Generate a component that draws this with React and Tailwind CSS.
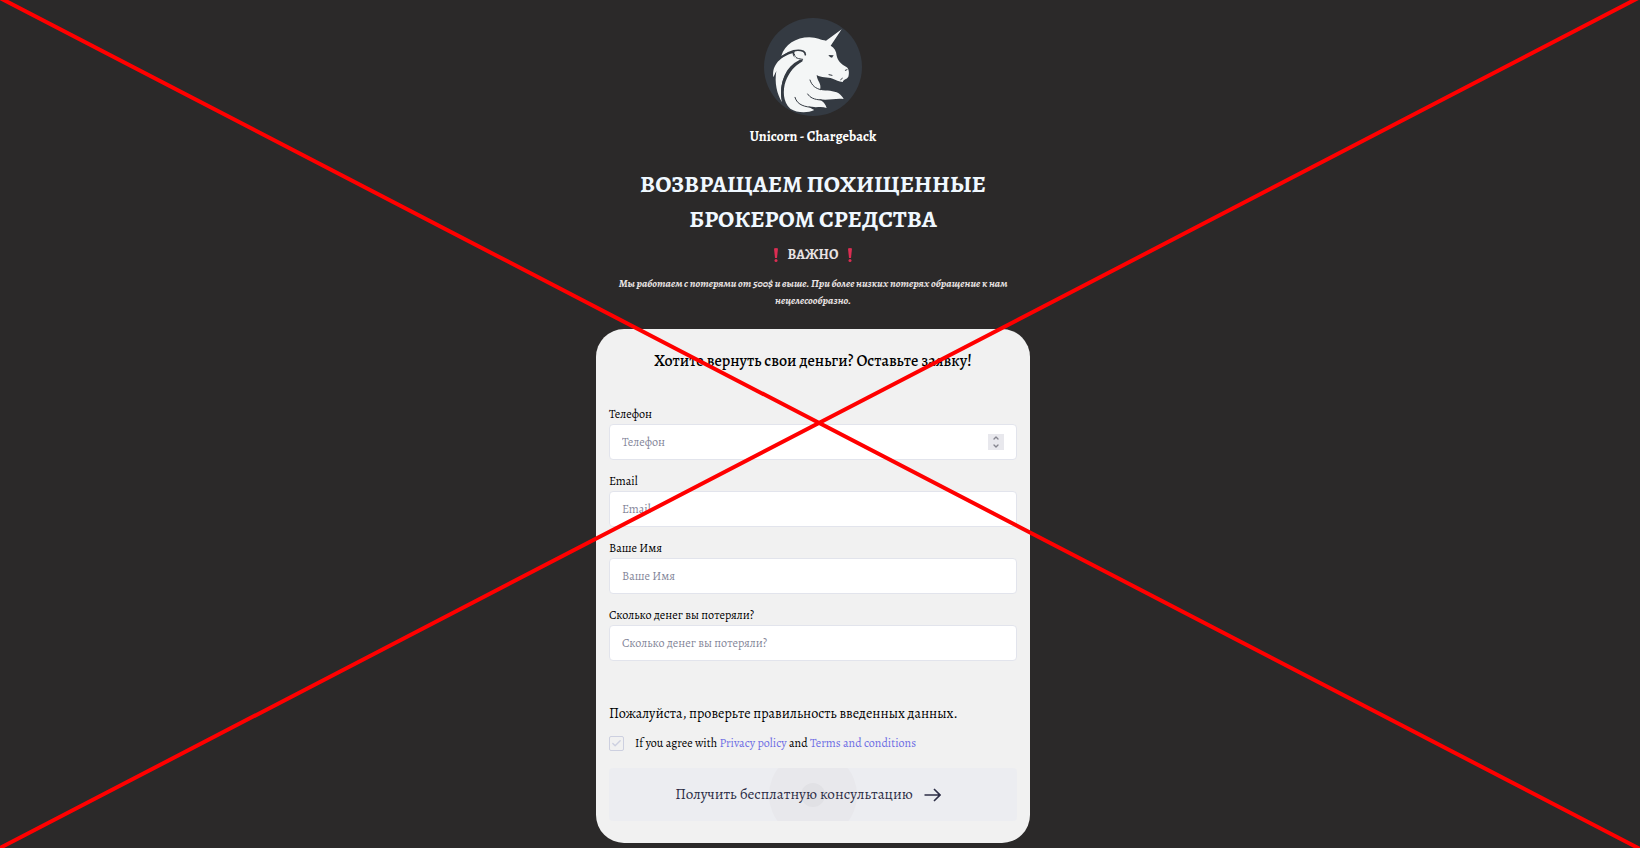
import React from "react";
import { Check, ChevronDown, ChevronUp } from "lucide-react";

const fields = [
  { id: "phone", label: "Телефон", type: "number" },
  { id: "email", label: "Email", type: "email" },
  { id: "name", label: "Ваше Имя", type: "text" },
  { id: "amount", label: "Сколько денег вы потеряли?", type: "text" },
];

const Logo = () => (
  <svg className="size-[98px]" viewBox="72 53 294 294" aria-hidden="true">
    <circle cx="219" cy="200" r="147" fill="#343a42" />
    <g fill="#f4f6f6">
      <path d="M124 167C134 133 168 111 208 111C230 111 244 120 258 121L305 87L272 136C283 142 289 152 290 166C293 181 304 192 318 199C328 204 328 219 325 229C319 238 312 235 308 245C296 244 288 239 278 235C262 229 244 233 230 224C231 241 246 251 240 268C262 272 280 269 296 279C304 285 308 291 311 296C284 293 262 302 236 296C249 303 257 311 260 323C243 317 228 324 205 318C213 325 219 328 223 329C202 339 171 338 151 325C128 306 128 268 137 243C147 216 165 196 187 180L164 173C160 165 161 158 166 153C150 153 135 161 124 167Z" />
      <path d="M158 159C124 168 94 193 100 231L109 212C103 247 111 282 126 305C117 262 129 213 163 188L182 177C168 176 158 171 158 159Z" />
    </g>
    <g fill="none" stroke="#343a42" strokeLinecap="round">
      <path strokeWidth="5" d="M126 169C149 152 174 145 190 153C195 156 196 160 196 163" />
      <path strokeWidth="3" d="M163 161C164 175 177 175 188 177" />
      <path strokeWidth="6" d="M185 181C141 207 119 245 128 299" />
      <path strokeWidth="3" d="M210 239C216 257 227 264 242 268" />
      <path strokeWidth="3" d="M203 281C210 292 222 298 244 299" />
      <path strokeWidth="3" d="M165 291C170 308 183 318 213 321" />
      <path strokeWidth="3" d="M316 210L321 208M267 223L276 225M302 238L307 234" />
    </g>
    <path fill="#343a42" d="M265 164L281 165L276 172L270 170Z" />
  </svg>
);

const Exclamation = () => (
  <svg className="h-4 w-2" viewBox="0 0 8 16" fill="#dc2d52" aria-hidden="true">
    <path d="M2 1.5Q4 0.5 6 1.5L5 11H3Z" />
    <circle cx="4" cy="13.5" r="1.5" />
  </svg>
);

const Arrow = () => (
  <svg
    className="relative h-3.5 w-[17px]"
    viewBox="0 0 17 14"
    fill="none"
    stroke="currentColor"
    strokeWidth="1.6"
    aria-hidden="true"
  >
    <path d="M0.5 7H16M10 1L16 7L10 13" />
  </svg>
);

const Field = ({ id, label, type }) => (
  <div className="flex flex-col gap-0.5">
    <label htmlFor={id} className="text-xs leading-4">
      {label}
    </label>
    <div className="flex h-9 items-center rounded border border-[#e2e4ec] bg-white px-3">
      <input
        id={id}
        type={type}
        placeholder={label}
        className="min-w-0 flex-1 bg-transparent text-xs outline-none [appearance:textfield] placeholder:text-[#85879a]"
      />
      {type === "number" && (
        <span className="flex size-4 flex-col items-center justify-center bg-[#e8e8ed] text-[#85858f]">
          <ChevronUp className="h-2 w-2.5" strokeWidth={4} />
          <ChevronDown className="h-2 w-2.5" strokeWidth={4} />
        </span>
      )}
    </div>
  </div>
);

const CrossLines = () => (
  <svg
    className="pointer-events-none absolute inset-0 size-full"
    viewBox="0 0 1640 848"
    preserveAspectRatio="none"
    stroke="#ff0000"
    strokeWidth="4"
    aria-hidden="true"
  >
    <path d="M0 -2L1644 850M-4 849L1644 -5" />
  </svg>
);

const App = () => {
  return (
    <div className="relative min-h-screen overflow-hidden bg-[#2b2929] font-['Alegreya','Liberation_Serif',serif] text-black">
      <main className="flex flex-col items-center pt-[18px] pr-3.5 pb-1.5">
        <Logo />
        <p className="mt-[11px] text-sm leading-5 font-bold text-white">
          Unicorn - Chargeback
        </p>
        <h1 className="mt-5 max-w-[434px] text-center text-2xl leading-[35px] font-bold text-[#f0f8ff]">
          ВОЗВРАЩАЕМ ПОХИЩЕННЫЕ
          <br />
          БРОКЕРОМ СРЕДСТВА
        </h1>
        <h2 className="mt-2 flex items-center gap-2 text-sm leading-5 font-bold text-[#e8e2e2]">
          <Exclamation />
          ВАЖНО
          <Exclamation />
        </h2>
        <p className="mt-2.5 max-w-[434px] text-center text-[11px] leading-[17px] font-bold text-[#e8e2e2] italic">
          Мы работаем с потерями от 500$ и выше. При более низких потерях
          обращение к нам
          <br />
          нецелесообразно.
        </p>

        <form className="mt-5 w-full max-w-[434px] rounded-[28px] bg-[#f1f1f1] px-[13px] pt-5 pb-[22px]">
          <h3 className="text-center text-base leading-6 font-medium">
            Хотите вернуть свои деньги? Оставьте заявку!
          </h3>
          <div className="mt-[33px] flex flex-col gap-[13px]">
            {fields.map((field) => (
              <Field key={field.id} {...field} />
            ))}
          </div>
          <p className="mt-[43px] text-sm leading-5">
            Пожалуйста, проверьте правильность введенных данных.
          </p>
          <div className="mt-[9px] flex items-center gap-[11px] text-xs leading-5">
            <span className="grid place-items-center">
              <input
                id="agree"
                type="checkbox"
                className="col-start-1 row-start-1 size-[15px] appearance-none rounded-xs border border-[#cdd0e0]"
              />
              <Check
                className="pointer-events-none col-start-1 row-start-1 size-[11px] text-[#cdd0e0]"
                strokeWidth={3}
              />
            </span>
            <label htmlFor="agree">
              If you agree with{" "}
              <a href="#privacy" className="text-[#6e6ee4]">
                Privacy policy
              </a>{" "}
              and{" "}
              <a href="#terms" className="text-[#6e6ee4]">
                Terms and conditions
              </a>
            </label>
          </div>
          <button
            type="button"
            className="relative mt-[15px] flex h-[53px] w-full items-center justify-center gap-[11px] overflow-hidden rounded bg-[#ecedf1] pr-2.5 text-[15px] text-[#2d2e46]"
          >
            <span className="absolute top-1/2 left-1/2 flex size-[88px] -translate-1/2 items-center justify-center rounded-full bg-[#e8e8ec]">
              <span className="size-6 rounded-full bg-[#e1e1e5]" />
            </span>
            <span className="relative">Получить бесплатную консультацию</span>
            <Arrow />
          </button>
        </form>
      </main>
      <CrossLines />
    </div>
  );
};

export default App;
